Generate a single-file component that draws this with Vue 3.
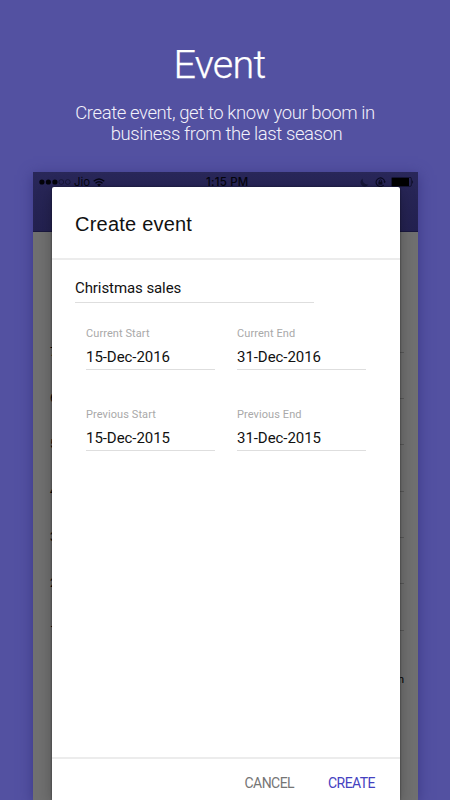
<script setup>
const levels = [7, 6, 5, 4, 3, 2, 1]
const periods = [
  { label: 'Current Start', value: '15-Dec-2016' },
  { label: 'Current End', value: '31-Dec-2016' },
  { label: 'Previous Start', value: '15-Dec-2015' },
  { label: 'Previous End', value: '31-Dec-2015' },
]
</script>

<template>
  <main class="page">
    <header class="hero">
      <h1>Event</h1>
      <p><span class="line-one">Create event, get to know your boom in</span><br /><span class="line-two">business from the last season</span></p>
    </header>
    <section class="phone">
      <div class="bar">
        <div class="status">
          <svg class="signal" width="34" height="8" viewBox="0 0 34 8">
            <g fill="#030309"><circle cx="2.9" cy="4" r="2.6" /><circle cx="9.4" cy="4" r="2.6" /><circle cx="15.9" cy="4" r="2.6" /></g>
            <g fill="none" stroke="#11112d" stroke-width=".7"><circle cx="22.3" cy="4" r="2.4" /><circle cx="28.8" cy="4" r="2.4" /></g>
          </svg>
          <span class="carrier">Jio</span>
          <svg class="wifi" width="12" height="9" viewBox="0 0 12 9" fill="none" stroke="#060612" stroke-width="1.3">
            <path d="M.7 3.3Q6-1.4 11.3 3.3M2.5 5.2Q6 2.3 9.5 5.2" /><path d="M4.1 6.5Q6 5.2 7.9 6.5L6 8.5Z" fill="#060612" stroke="none" />
          </svg>
          <span class="clock">1:15 PM</span>
          <svg class="moon" width="9" height="9" viewBox="0 0 9 9"><path d="M3 .5A4.2 4.2 0 1 0 8.5 6.2A4.4 4.4 0 0 1 3 .5Z" fill="#161638" /></svg>
          <svg class="lock" width="11" height="10" viewBox="0 0 11 10" fill="none" stroke="#0b0b20">
            <path d="M8.7 8A4.3 4.3 0 1 1 9.7 4.9" stroke-width="1.1" /><path d="M8.4 4.5h2.4L9.7 6.2Z" fill="#0b0b20" stroke="none" />
            <path d="M4.3 5V3.9a1.1 1.1 0 0 1 2.2 0V5" stroke-width=".9" /><rect x="3.4" y="4.7" width="4" height="2.9" fill="#0b0b20" stroke="none" />
          </svg>
          <svg class="battery" width="23" height="10" viewBox="0 0 23 10"><rect x=".4" y=".4" width="20" height="9" rx="1.4" fill="none" stroke="#101029" stroke-width=".8" /><rect x="1" y="1" width="17" height="8" fill="#000" /><path d="M21.3 3Q23 5 21.3 7Z" fill="#08081a" /></svg>
        </div>
      </div>
      <div class="chart">
        <div v-for="level in levels" :key="level" class="level"><span>{{ level }}</span><i></i></div>
        <div class="axis">Jan</div>
      </div>
      <form class="dialog" @submit.prevent>
        <div class="title">Create event</div>
        <div class="body">
          <div class="name">Christmas sales</div>
          <div class="periods">
            <div v-for="period in periods" :key="period.label" class="field">
              <label>{{ period.label }}</label>
              <div class="value">{{ period.value }}</div>
            </div>
          </div>
        </div>
        <div class="actions"><button type="button">CANCEL</button><button class="create">CREATE</button></div>
      </form>
    </section>
  </main>
</template>

<style>
body { margin: 0; overflow: hidden; }
</style>
<style scoped>
* { box-sizing: border-box; }
.page { height: 800px; overflow: hidden; background: #5351a1; font-family: Roboto, sans-serif; display: flex; flex-direction: column; }
.hero { height: 172px; flex: none; padding-top: 41px; text-align: center; color: #fff; }
h1 { margin: 0; padding-right: 11px; font-size: 39.5px; font-weight: 300; line-height: 47px; letter-spacing: -.7px; -webkit-text-stroke: .25px #fff; }
.hero p { margin: 15px 0 0; font-size: 18.5px; font-weight: 300; line-height: 21px; letter-spacing: -.4px; color: #f2f0fa; }
.line-two { padding-left: 3px; }
.phone { position: relative; margin: 0 32px 0 33px; flex: 1; background: #707070; box-shadow: 0 3px 13px #3b3885; }
.bar { height: 60px; background: linear-gradient(#292759, #232150); border-bottom: 1px solid #1a183f; }
.status { height: 20px; display: flex; align-items: center; color: #05050e; font: 11.5px Inter, sans-serif; }
.signal { margin-left: 6px; }
.carrier { width: 16px; margin-left: 1px; }
.wifi { margin-left: 3px; }
.clock { margin-left: 101px; width: 44px; font-size: 11.5px; font-weight: 500; letter-spacing: .2px; white-space: nowrap; }
.moon { margin-left: 110px; }
.lock { margin-left: 6px; }
.battery { margin-left: 5px; }
.chart { padding: 96.5px 14px 0 17px; color: #000; font-size: 12px; }
.level { height: 46.4px; display: flex; align-items: flex-start; line-height: 46.4px; }
.level i { margin-top: 23px; flex: 1; height: 1px; background: #595959; }
.axis { margin-top: 19px; text-align: right; font-size: 11px; line-height: 16px; }
.dialog { position: absolute; inset: 15px 18px 0 19px; display: flex; flex-direction: column; background: #fff; border-radius: 2px 2px 0 0; box-shadow: 0 0 2px rgba(0,0,0,.6), 0 4px 16px rgba(0,0,0,.28); color: #111; }
.title { height: 73px; padding: 1px 23px 0; border-bottom: 2px solid #ececec; font: 20px/72px "Liberation Sans", sans-serif; letter-spacing: .22px; }
.body { flex: 1; padding: 14px 33px 0 23px; }
.name { width: 238.5px; height: 29px; border-bottom: 1px solid #dedede; line-height: 28px; font-size: 15px; letter-spacing: -.08px; }
.periods { display: grid; grid-template-columns: 129px 129px; column-gap: 22px; row-gap: 36px; padding: 22px 0 0 11px; }
.field { height: 45px; border-bottom: 1px solid #dedede; }
.field label { display: block; height: 17px; line-height: 17px; font-size: 11px; letter-spacing: .08px; color: #a9a9a9; }
.value { line-height: 30px; font-size: 15px; letter-spacing: -.05px; }
.actions { height: 43px; border-top: 2px solid #ececec; display: flex; justify-content: flex-end; gap: 34px; padding: 6px 25px 0 0; }
button { height: 36px; padding: 0; border: 0; background: none; font: 14px/36px Roboto, sans-serif; letter-spacing: -.55px; color: #757575; }
.create { color: #4541bf; }
</style>
